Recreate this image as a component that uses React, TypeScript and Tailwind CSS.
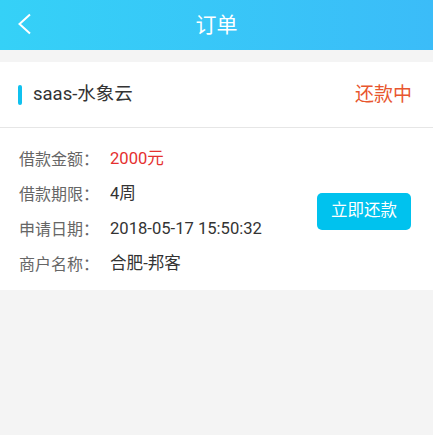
const rows = [
  { label: '借款金额：', value: '2000元', red: true },
  { label: '借款期限：', value: '4周' },
  { label: '申请日期：', value: '2018-05-17 15:50:32' },
  { label: '商户名称：', value: '合肥-邦客' },
];

export default function App() {
  return (
    <div
      className="w-[433px] h-[435px] bg-[#f4f4f4] overflow-hidden"
      style={{ fontFamily: 'Roboto, "Noto Sans CJK SC", sans-serif' }}
    >
      <header className="relative h-[50px] flex items-center justify-center bg-gradient-to-r from-[#35d1f7] to-[#3bbcf8]">
        <svg className="absolute left-[17px] top-[13px]" width="16" height="22" viewBox="0 0 16 22">
          <polyline points="13,1.5 2.5,11 13,20.5" fill="none" stroke="#fff" strokeWidth="2" />
        </svg>
        <h1 className="text-white text-[21px] leading-none">订单</h1>
      </header>

      <div className="mt-[12px] bg-white">
        <div className="h-[66px] flex items-center justify-between pl-[18px] pr-[21px] border-b border-[#e6e6e6]">
          <div className="flex items-center">
            <span className="w-[4px] h-[20px] rounded-full bg-[#10c1ef]" />
            <span className="ml-[11px] text-[18.5px] text-[#333] leading-none">saas-水象云</span>
          </div>
          <span className="text-[19px] text-[#e8562e] leading-none">还款中</span>
        </div>

        <div className="flex items-center justify-between pl-[19px] pr-[22px] pt-[14px] pb-[8px]">
          <div className="flex flex-col">
            {rows.map((r) => (
              <div key={r.label} className="h-[35px] flex items-center text-[16px]">
                <span className="w-[91px] text-[#666]">{r.label}</span>
                <span className={`text-[16.6px] ${r.red ? 'text-[#e5302f]' : 'text-[#333]'}`}>{r.value}</span>
              </div>
            ))}
          </div>
          <button className="w-[94px] h-[37px] mb-[2px] rounded-[5px] bg-[#00c2ee] text-white text-[16.5px]">
            立即还款
          </button>
        </div>
      </div>
    </div>
  );
}
